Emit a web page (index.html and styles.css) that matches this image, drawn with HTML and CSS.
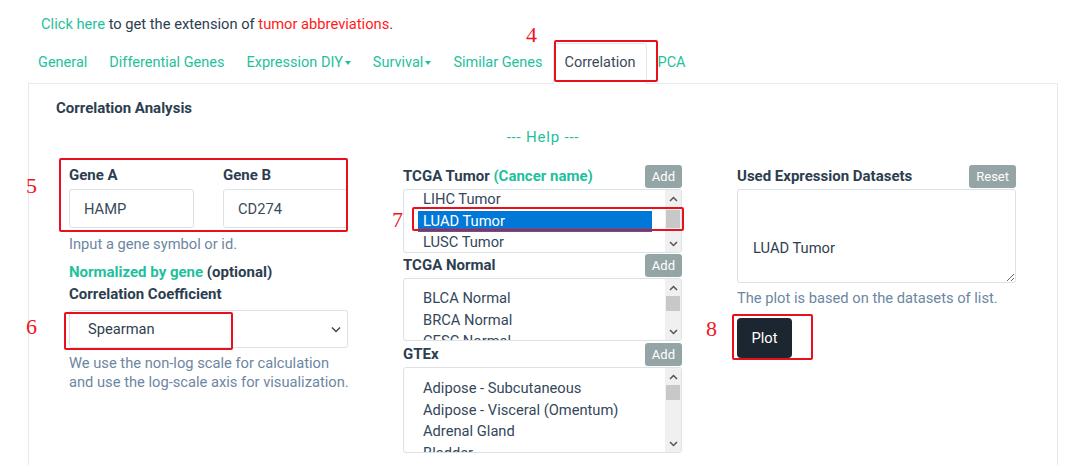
FILE: index.html
```html
<!DOCTYPE html>
<html lang="en">
<head>
    <meta charset="UTF-8">
    <title>Correlation Analysis</title>
    <link rel="stylesheet" href="styles.css">
</head>
<body>
    <p class="ext-note"><a href="#" class="teal">Click here</a> to get the extension of <span class="red-text">tumor abbreviations</span>.</p>

    <ul class="tabs">
        <li><a href="#">General</a></li>
        <li><a href="#">Differential Genes</a></li>
        <li><a href="#">Expression DIY<span class="caret"></span></a></li>
        <li><a href="#">Survival<span class="caret"></span></a></li>
        <li><a href="#">Similar Genes</a></li>
        <li><a href="#" class="active">Correlation</a></li>
        <li><a href="#">PCA</a></li>
    </ul>

    <div class="panel">
        <h5 class="panel-title">Correlation Analysis</h5>
        <div class="help">--- Help ---</div>

        <div class="form-grid">
            <!-- left column -->
            <div class="col">
                <div class="gene-pair">
                    <div class="field">
                        <label>Gene A</label>
                        <input type="text" value="HAMP">
                    </div>
                    <div class="field">
                        <label>Gene B</label>
                        <input type="text" value="CD274">
                    </div>
                </div>
                <p class="muted first">Input a gene symbol or id.</p>
                <p class="opt-line"><span class="teal">Normalized by gene</span> (optional)</p>
                <label class="block-label">Correlation Coefficient</label>
                <div class="fake-select">
                    <span>Spearman</span>
                    <svg width="10" height="7" viewBox="0 0 10 7"><path d="M1 1.5 L5 5.5 L9 1.5" fill="none" stroke="#444" stroke-width="1.4"/></svg>
                </div>
                <p class="muted two-lines">We use the non-log scale for calculation<br>and use the log-scale axis for visualization.</p>
            </div>

            <!-- middle column -->
            <div class="col">
                <div class="row-head">
                    <label>TCGA Tumor <span class="teal">(Cancer name)</span></label>
                    <button class="btn-grey">Add</button>
                </div>
                <div class="listbox lb-tumor">
                    <ul class="items scrolled">
                        <li>LIHC Tumor</li>
                        <li class="selected">LUAD Tumor</li>
                        <li>LUSC Tumor</li>
                    </ul>
                    <div class="scrollbar">
                        <div class="arrow"><svg width="9" height="6" viewBox="0 0 9 6"><path d="M1 5 L4.5 1.5 L8 5" fill="none" stroke="#555" stroke-width="1.5"/></svg></div>
                        <div class="track"><div class="thumb thumb-tumor"></div></div>
                        <div class="arrow"><svg width="9" height="6" viewBox="0 0 9 6"><path d="M1 1 L4.5 4.5 L8 1" fill="none" stroke="#555" stroke-width="1.5"/></svg></div>
                    </div>
                </div>

                <div class="row-head">
                    <label>TCGA Normal</label>
                    <button class="btn-grey">Add</button>
                </div>
                <div class="listbox lb-normal">
                    <ul class="items">
                        <li>BLCA Normal</li>
                        <li>BRCA Normal</li>
                        <li>CESC Normal</li>
                    </ul>
                    <div class="scrollbar">
                        <div class="arrow"><svg width="9" height="6" viewBox="0 0 9 6"><path d="M1 5 L4.5 1.5 L8 5" fill="none" stroke="#555" stroke-width="1.5"/></svg></div>
                        <div class="track"><div class="thumb"></div></div>
                        <div class="arrow"><svg width="9" height="6" viewBox="0 0 9 6"><path d="M1 1 L4.5 4.5 L8 1" fill="none" stroke="#555" stroke-width="1.5"/></svg></div>
                    </div>
                </div>

                <div class="row-head">
                    <label>GTEx</label>
                    <button class="btn-grey">Add</button>
                </div>
                <div class="listbox lb-gtex">
                    <ul class="items">
                        <li>Adipose - Subcutaneous</li>
                        <li>Adipose - Visceral (Omentum)</li>
                        <li>Adrenal Gland</li>
                        <li>Bladder</li>
                    </ul>
                    <div class="scrollbar">
                        <div class="arrow"><svg width="9" height="6" viewBox="0 0 9 6"><path d="M1 5 L4.5 1.5 L8 5" fill="none" stroke="#555" stroke-width="1.5"/></svg></div>
                        <div class="track"><div class="thumb"></div></div>
                        <div class="arrow"><svg width="9" height="6" viewBox="0 0 9 6"><path d="M1 1 L4.5 4.5 L8 1" fill="none" stroke="#555" stroke-width="1.5"/></svg></div>
                    </div>
                </div>
            </div>

            <!-- right column -->
            <div class="col">
                <div class="row-head">
                    <label>Used Expression Datasets</label>
                    <button class="btn-grey">Reset</button>
                </div>
                <textarea class="datasets">


LUAD Tumor</textarea>
                <p class="muted plot-note">The plot is based on the datasets of list.</p>
                <button class="btn-plot">Plot</button>
            </div>
        </div>
    </div>

    <!-- tutorial markers drawn over the screenshot -->
    <div class="mark box4"></div>
    <div class="mark box5"></div>
    <div class="mark box6"></div>
    <div class="mark box7"></div>
    <div class="mark box8"></div>
    <span class="num n4">4</span>
    <span class="num n5">5</span>
    <span class="num n6">6</span>
    <span class="num n7">7</span>
    <span class="num n8">8</span>
</body>
</html>
```

FILE: styles.css
```css
:root {
    --teal: #1fc19c;
    --text: #2c3e50;
    --muted: #6d86a2;
    --border: #dbe2e8;
    --grey-btn: #95a5a6;
    --mark-red: #e8101a;
}

body {
    margin: 0;
    font-family: Roboto, "Noto Sans", Arial, sans-serif;
    font-size: 14.7px;
    color: var(--text);
    background: #fff;
    position: relative;
    width: 1080px;
    height: 465px;
    overflow: hidden;
}

p {
    margin: 0;
}

.teal {
    color: var(--teal);
    text-decoration: none;
}

.red-text {
    color: #ff1a1a;
}

.ext-note {
    padding: 14px 0 0 41px;
    line-height: 20px;
}

/* tabs */
.tabs {
    list-style: none;
    display: flex;
    margin: 9px 0 0 27px;
    padding: 0;
    position: relative;
    z-index: 1;
    font-size: 14.5px;
}

.tabs a {
    display: block;
    padding: 9px 10px 10px;
    line-height: 20px;
    color: var(--teal);
    text-decoration: none;
    border: 1px solid transparent;
    border-bottom: none;
    border-radius: 4px 4px 0 0;
}

.tabs a.active {
    color: #3b4a5a;
    background: #fff;
    border-color: #e4e8ec;
    margin-bottom: -1px;
    padding-bottom: 11px;
}

.caret {
    display: inline-block;
    margin-left: 2px;
    vertical-align: middle;
    border-top: 4px solid var(--teal);
    border-left: 3.5px solid transparent;
    border-right: 3.5px solid transparent;
}

/* panel */
.panel {
    margin-left: 28px;
    width: 1030px;
    height: 382px;
    border: 1px solid #e6eaee;
    border-bottom: none;
    padding: 0 0 0 27px;
    box-sizing: border-box;
}

.panel-title {
    margin: 14px 0 0;
    font-size: 15px;
    line-height: 20px;
    font-weight: bold;
}

.help {
    margin: 9px 0 0 -27px;
    text-align: center;
    color: var(--teal);
    line-height: 20px;
    font-size: 15px;
    letter-spacing: 0.8px;
}

.form-grid {
    display: grid;
    grid-template-columns: 279px 279px 279px;
    column-gap: 55px;
    margin: 17px 0 0 13px;
}

label {
    font-weight: bold;
    font-size: 15px;
}

/* left column */
.gene-pair {
    display: flex;
    gap: 29px;
}

.field {
    width: 125px;
}

.field label,
.block-label {
    display: block;
    line-height: 22px;
    margin-bottom: 3px;
}

input {
    display: block;
    width: 125px;
    height: 39px;
    box-sizing: border-box;
    border: 1px solid var(--border);
    border-radius: 3px;
    padding: 0 14px;
    font: inherit;
    color: #3a4a5a;
}

.muted {
    color: var(--muted);
    line-height: 20px;
}

.muted.first {
    margin-top: 6px;
}

.opt-line {
    margin-top: 8px;
    font-weight: bold;
    font-size: 15px;
    line-height: 20px;
}

.block-label {
    margin-top: 1px;
    line-height: 22px;
    margin-bottom: 5px;
}

.fake-select {
    height: 38px;
    box-sizing: border-box;
    border: 1px solid var(--border);
    border-radius: 3px;
    display: flex;
    align-items: center;
    justify-content: space-between;
    padding: 0 6px 0 18px;
    color: #2f3e4e;
}

.two-lines {
    margin-top: 6px;
    line-height: 19px;
    white-space: nowrap;
}

/* middle column */
.row-head {
    display: flex;
    justify-content: space-between;
    align-items: center;
    height: 24px;
    margin-bottom: 1px;
}

.btn-grey {
    height: 23px;
    border: none;
    border-radius: 3px;
    background: var(--grey-btn);
    color: #fff;
    font: inherit;
    font-size: 13px;
    padding: 0 7px;
}

.listbox {
    display: flex;
    border: 1px solid var(--border);
    border-radius: 3px;
    box-sizing: border-box;
    overflow: hidden;
}

.lb-tumor { height: 64px; }
.lb-normal { height: 63px; }
.lb-gtex { height: 86px; }

.lb-normal + .row-head { margin-top: 1px; }

.items {
    flex: 1;
    list-style: none;
    margin: 0;
    padding: 9px 13px 0 14px;
    color: #34475a;
}

.lb-gtex .items {
    padding-top: 10px;
}

.items.scrolled {
    padding-top: 0;
    margin-top: -1px;
}

.items li {
    line-height: 21.5px;
    padding-left: 5px;
    white-space: nowrap;
}

.items li.selected {
    background: #0078d7;
    color: #fff;
}

.scrollbar {
    width: 16px;
    background: #f0f0f0;
    display: flex;
    flex-direction: column;
}

.arrow {
    height: 17px;
    display: flex;
    align-items: center;
    justify-content: center;
}

.track {
    flex: 1;
    padding: 0 1px;
}

.thumb {
    height: 15px;
    background: #c8c8c8;
}

.thumb-tumor {
    height: 18px;
    margin-top: 3px;
}

/* right column */
.datasets {
    display: block;
    width: 279px;
    height: 94px;
    box-sizing: border-box;
    border: 1px solid var(--border);
    border-radius: 3px;
    padding: 6px 15px;
    font: inherit;
    line-height: 21px;
    color: #2f3e4e;
    overflow: hidden;
}

.plot-note {
    margin-top: 5px;
}

.btn-plot {
    margin-top: 10px;
    width: 55px;
    height: 40px;
    border: none;
    border-radius: 4px;
    background: #1c2630;
    color: #fff;
    font: inherit;
}

/* red tutorial markers */
.mark {
    position: absolute;
    border: 2px solid var(--mark-red);
    border-radius: 2px;
    box-sizing: border-box;
    z-index: 5;
}

.box4 { left: 554px; top: 40px; width: 104px; height: 42px; }
.box5 { left: 59px; top: 158px; width: 289px; height: 74px; }
.box6 { left: 64px; top: 312px; width: 169px; height: 38px; }
.box7 { left: 412px; top: 207px; width: 272px; height: 24px; }
.box8 { left: 732px; top: 314px; width: 81px; height: 46px; }

.num {
    position: absolute;
    font-family: "Liberation Serif", "Times New Roman", serif;
    font-size: 22px;
    line-height: 22px;
    color: #f0141e;
    z-index: 5;
}

.n4 { left: 526px; top: 24px; }
.n5 { left: 26px; top: 175px; }
.n6 { left: 26px; top: 316px; }
.n7 { left: 392px; top: 209px; }
.n8 { left: 706px; top: 318px; }
```
